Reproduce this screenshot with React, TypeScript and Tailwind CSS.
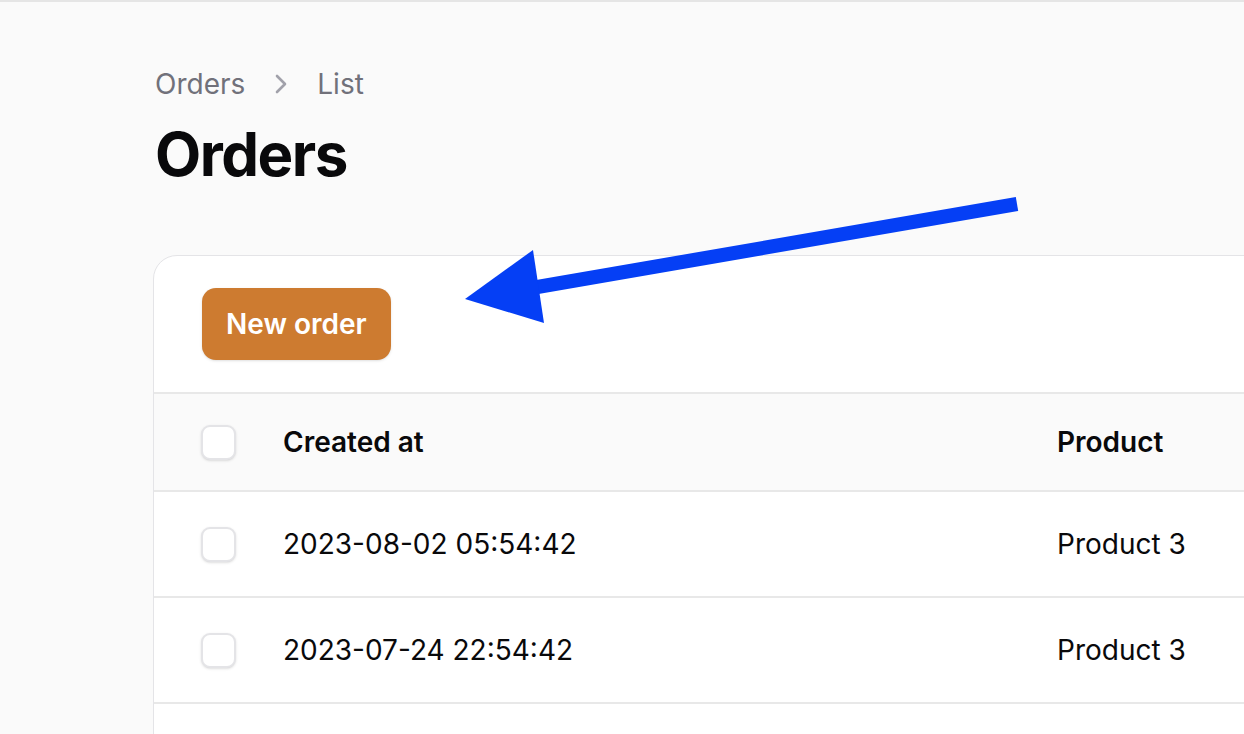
const ROWS = [
  { created: '2023-08-02 05:54:42', product: 'Product 3' },
  { created: '2023-07-24 22:54:42', product: 'Product 3' },
  { created: '', product: '' },
];

function Checkbox() {
  return <div className="w-[35px] h-[35px] rounded-[9px] border-2 border-[#e4e4e7] bg-white shadow-sm shrink-0" />;
}

function Arrow() {
  // annotation arrow drawn over the page
  return (
    <svg className="absolute left-0 top-0 pointer-events-none" width="1244" height="734" viewBox="0 0 1244 734">
      <line x1="1017" y1="202" x2="520" y2="288" stroke="#053ff5" strokeWidth="14" />
      <polygon points="465,297 533,248 544,321" fill="#053ff5" />
    </svg>
  );
}

export default function App() {
  return (
    <div className="relative w-[1244px] h-[734px] overflow-hidden bg-[#fafafa] border-t-2 border-[#e5e5e5]" style={{ fontFamily: 'Inter, "Noto Sans", sans-serif' }}>
      <div className="pl-[155px] pt-[62px]">
        <nav className="flex items-center text-[28px] leading-[40px] text-[#71717a]">
          <span>Orders</span>
          <svg className="mx-[28px]" width="16" height="24" viewBox="0 0 16 24" fill="none">
            <path d="M4 4 L12 12 L4 20" stroke="#a1a1aa" strokeWidth="2.6" strokeLinecap="round" strokeLinejoin="round" />
          </svg>
          <span>List</span>
        </nav>
        <h1 className="mt-[14px] text-[60px] leading-[72px] font-bold tracking-tight text-[#09090b]">Orders</h1>
      </div>

      <div className="ml-[153px] mt-[65px] w-[1200px] bg-white border border-[#e4e4e7] rounded-[24px] overflow-hidden">
        <div className="px-[48px] pt-[32px] pb-[32px] border-b-2 border-[#e8e8e8]">
          <button className="px-[24px] py-[16px] rounded-[14px] bg-[#cd7b30] text-white text-[28px] leading-[40px] font-semibold shadow-sm">
            New order
          </button>
        </div>
        <div className="flex items-center h-[98px] bg-[#fafafa] border-b-2 border-[#e8e8e8] pl-[47px]">
          <Checkbox />
          <div className="ml-[47px] w-[774px] text-[28px] font-semibold text-[#09090b]">Created at</div>
          <div className="text-[28px] font-semibold text-[#09090b]">Product</div>
        </div>
        {ROWS.map((r, i) => (
          <div key={i} className="flex items-center h-[106px] border-b-2 border-[#e8e8e8] pl-[47px]">
            <Checkbox />
            <div className="ml-[47px] w-[774px] text-[28px] text-[#09090b]">{r.created}</div>
            <div className="text-[28px] text-[#09090b]">{r.product}</div>
          </div>
        ))}
      </div>

      <Arrow />
    </div>
  );
}
